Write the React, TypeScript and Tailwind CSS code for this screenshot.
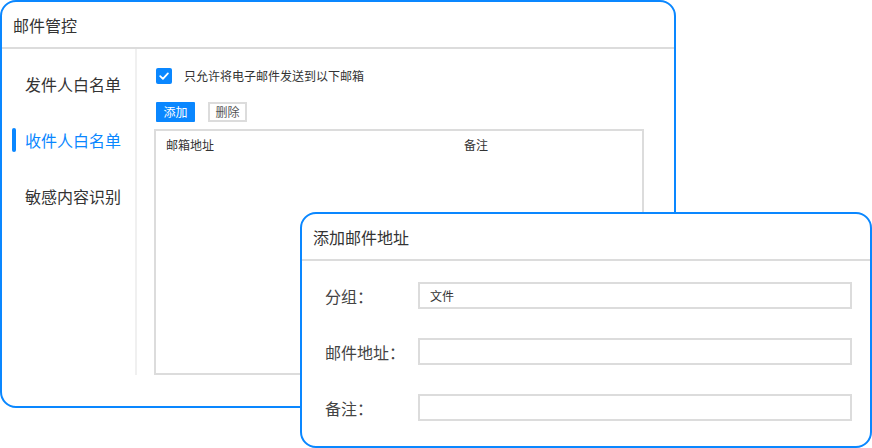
const FONT = "font-['Noto_Sans_CJK_SC','Noto_Sans',sans-serif]";

const MENU = [
  { label: "发件人白名单", active: false },
  { label: "收件人白名单", active: true },
  { label: "敏感内容识别", active: false },
];

const FIELDS = [
  { label: "分组：", value: "文件" },
  { label: "邮件地址：", value: "" },
  { label: "备注：", value: "" },
];

function MailWindow() {
  return (
    <div className="absolute left-0 top-0 w-[676px] h-[408px] border-2 border-[#0a87ff] rounded-[16px] bg-white overflow-hidden">
      <div className="h-[47px] flex items-center pl-[11px] border-b-2 border-[#dcdcdc]">
        <h1 className="text-[16px] text-[#333]">邮件管控</h1>
      </div>
      <div className="flex">
        {/* Sidebar */}
        <div className="w-[135px] h-[326px] border-r-2 border-[#f0f0f0] pt-[7px]">
          {MENU.map((m) => (
            <div key={m.label} className="relative h-[56px] flex items-center pl-[23px]">
              {m.active && <span className="absolute left-[10px] top-[16px] w-[4px] h-[24px] rounded-full bg-[#0a87ff]" />}
              <span className={`text-[16px] ${m.active ? "text-[#0a87ff]" : "text-[#333]"}`}>{m.label}</span>
            </div>
          ))}
        </div>

        {/* Content */}
        <div className="pl-[17px] pt-[19px]">
          <label className="ml-[2px] flex items-center gap-[12px] h-[16px]">
            <span className="w-[16px] h-[16px] rounded-[2px] bg-[#0a87ff] flex items-center justify-center">
              <svg width="12" height="12" viewBox="0 0 12 12" fill="none">
                <path d="M2.2 6.2 4.9 8.8 9.9 3.4" stroke="white" strokeWidth="1.8" strokeLinecap="round" strokeLinejoin="round" />
              </svg>
            </span>
            <span className="text-[12px] text-[#333]">只允许将电子邮件发送到以下邮箱</span>
          </label>

          <div className="ml-[2px] mt-[18px] flex gap-[13px]">
            <button className="w-[39px] h-[20px] bg-[#0a87ff] text-white text-[12px] leading-none rounded-[1px]">添加</button>
            <button className="w-[39px] h-[20px] border-2 border-[#dcdcdc] text-[#555] text-[12px] leading-none">删除</button>
          </div>

          <div className="mt-[7px] w-[490px] h-[246px] border-2 border-[#dcdcdc]">
            <div className="flex pl-[10px] pt-[5px] text-[12px] text-[#333]">
              <span className="w-[298px]">邮箱地址</span>
              <span>备注</span>
            </div>
          </div>
        </div>
      </div>
    </div>
  );
}

function AddDialog() {
  return (
    <div className="absolute left-[300px] top-[212px] w-[572px] h-[236px] border-2 border-[#0a87ff] rounded-[16px] bg-white overflow-hidden">
      <div className="h-[47px] flex items-center pl-[11px] border-b-2 border-[#dcdcdc]">
        <h2 className="text-[16px] text-[#333]">添加邮件地址</h2>
      </div>
      <div className="pt-[21px] pl-[23px] flex flex-col gap-[29px]">
        {FIELDS.map((f) => (
          <div key={f.label} className="flex items-center">
            <span className="w-[93px] text-[16px] text-[#444]">{f.label}</span>
            <div className="w-[434px] h-[27px] border-2 border-[#dcdcdc] flex items-center pl-[10px] text-[12px] text-[#333]">
              {f.value}
            </div>
          </div>
        ))}
      </div>
    </div>
  );
}

export default function App() {
  return (
    <div className={`relative w-[872px] h-[448px] bg-white ${FONT}`}>
      <MailWindow />
      <AddDialog />
    </div>
  );
}
